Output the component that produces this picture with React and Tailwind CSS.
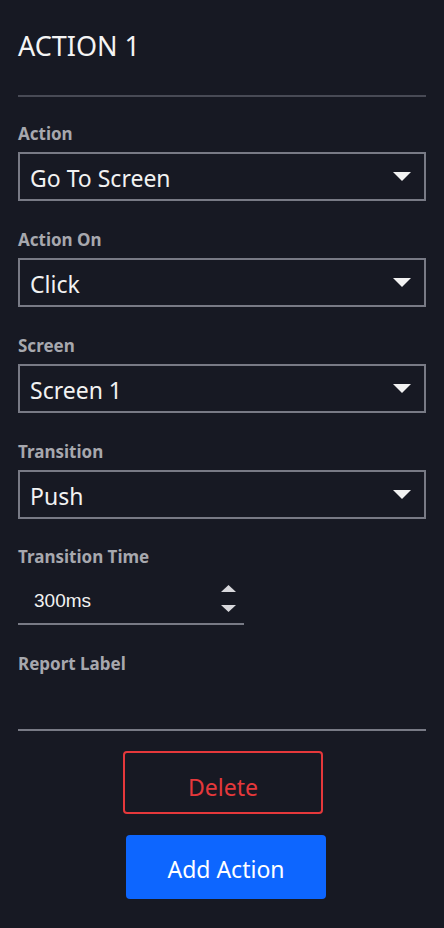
const font = { fontFamily: '"Noto Sans", "Open Sans", sans-serif' };

function Caret() {
  return (
    <svg width="18" height="9" viewBox="0 0 18 9" className="shrink-0">
      <path d="M0 0 H18 L9 9 Z" fill="#f2f2f2" />
    </svg>
  );
}

function Label({ children }) {
  return (
    <div className="h-[20px] text-[17px] leading-[20px] font-bold text-[#a7a8ae] pt-[1px]">
      {children}
    </div>
  );
}

function SelectBox({ label, value, first }) {
  return (
    <div className={first ? "mt-[26px]" : "mt-[28px]"}>
      <Label>{label}</Label>
      <div className="mt-[9px] h-[49px] border-2 border-[#787a85] flex items-center justify-between pl-[10px] pr-[13px]">
        <span className="text-[23px] text-[#f2f2f2] pt-[4px]">{value}</span>
        <Caret />
      </div>
    </div>
  );
}

export default function App() {
  return (
    <div className="min-h-[928px] bg-[#171923] px-[18px]" style={font}>
      <div className="pt-[30px] h-[62px] text-[27px] leading-[32px] text-[#f4f4f4]">
        ACTION 1
      </div>
      <div className="mt-[33px] h-[2px] bg-[#484a55]" />

      <SelectBox label="Action" value="Go To Screen" first />
      <SelectBox label="Action On" value="Click" />
      <SelectBox label="Screen" value="Screen 1" />
      <SelectBox label="Transition" value="Push" />

      <div className="mt-[27px]">
        <Label>Transition Time</Label>
        <div className="w-[226px] h-[59px] border-b-2 border-[#787a85] flex items-center justify-between pl-[16px] pr-[8px] pt-[14px]">
          <span
            className="text-[19px] text-[#f2f2f2]"
            style={{ fontFamily: '"Liberation Sans", Arial, sans-serif' }}
          >
            300ms
          </span>
          <div className="flex flex-col gap-[13px] -mt-[6px]">
            <svg width="15" height="7" viewBox="0 0 15 7">
              <path d="M7.5 0 L15 7 H0 Z" fill="#d8d8dc" />
            </svg>
            <svg width="15" height="7" viewBox="0 0 15 7">
              <path d="M0 0 H15 L7.5 7 Z" fill="#d8d8dc" />
            </svg>
          </div>
        </div>
      </div>

      <div className="mt-[28px]">
        <Label>Report Label</Label>
        <div className="h-[58px] border-b-2 border-[#787a85]" />
      </div>

      <div className="flex flex-col pb-[28px]">
        <button className="mt-[20px] ml-[105px] w-[200px] h-[63px] border-2 border-[#e5383b] rounded-[4px] text-[23px] text-[#e5383b] pt-[9px]">
          Delete
        </button>
        <button className="mt-[21px] ml-[108px] w-[200px] h-[64px] bg-[#0d66ff] rounded-[4px] text-[23px] text-white pt-[4px]">
          Add Action
        </button>
      </div>
    </div>
  );
}
